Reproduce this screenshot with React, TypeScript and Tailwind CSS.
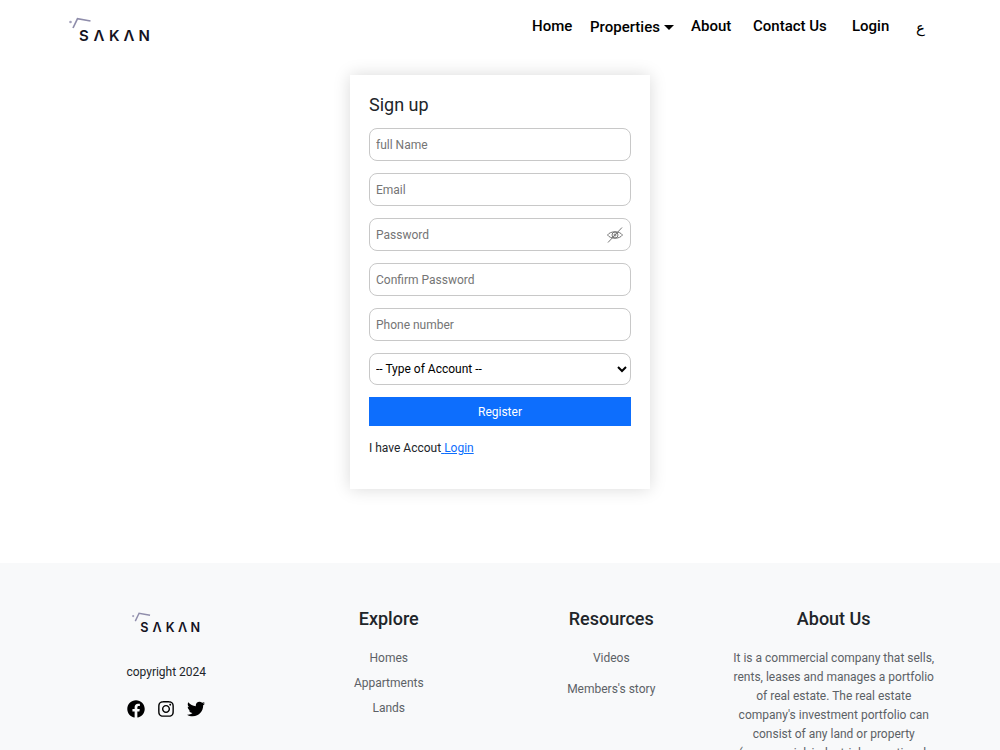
import { FaFacebook, FaInstagram, FaTwitter } from "react-icons/fa";

const fields = [
  { id: "fullName", label: "full Name", type: "text" },
  { id: "email", label: "Email", type: "email" },
  { id: "password", label: "Password", type: "password" },
  { id: "confirmPassword", label: "Confirm Password", type: "password" },
  { id: "phone", label: "Phone number", type: "tel" },
];

function Logo({ className }: { className: string }) {
  return (
    <svg viewBox="0 0 84 32" className={className} role="img" aria-label="Sakan">
      <circle cx="2.5" cy="6" r="1.3" fill="#a3a1bb" />
      <path
        d="M5 12 L9.5 2.6 L22.5 5"
        fill="none"
        stroke="#8f8dab"
        strokeWidth="1.7"
      />
      <text
        x="11 25.5 41 55.5 70.5"
        y="25"
        fontSize="15"
        fontWeight="600"
        fill="#15131f"
        className="font-['Inter',sans-serif]"
      >
        SΛKΛN
      </text>
    </svg>
  );
}

function EyeOff() {
  return (
    <svg
      viewBox="0 0 16 16"
      className="h-4 w-4"
      fill="none"
      stroke="#777"
      strokeWidth="1"
      aria-hidden="true"
    >
      <path d="M0.5 8 C3.5 3.7 12.5 3.7 15.5 8 C12.5 12.3 3.5 12.3 0.5 8 Z" />
      <circle cx="8" cy="8" r="3" />
      <circle cx="8" cy="8" r="1" />
      <path d="M1 15.5 L15 0.5" />
    </svg>
  );
}

function Navbar() {
  return (
    <header className="flex items-start justify-between pt-4 pr-[76px] pl-[68px]">
      <a href="#home">
        <Logo className="h-8 w-[84px]" />
      </a>
      <nav className="flex items-start text-[15px] leading-5 font-medium text-black">
        <a href="#home" className="w-[58px]">
          Home
        </a>
        <button
          type="button"
          className="flex w-[101px] items-center gap-1 pt-px font-medium"
        >
          Properties
          <span className="border-x-[5px] border-t-[5px] border-x-transparent border-t-black" />
        </button>
        <a href="#about" className="w-[62px]">
          About
        </a>
        <a href="#contact" className="w-[99px] whitespace-nowrap">
          Contact Us
        </a>
        <a href="#login" className="w-16">
          Login
        </a>
        <a href="#ar" lang="ar" className="w-2 pt-0.5 font-['DejaVu_Sans',sans-serif]">
          ع
        </a>
      </nav>
    </header>
  );
}

function SignUp() {
  return (
    <main className="mt-[27px] flex justify-center px-4 pb-[74px]">
      <form className="w-full max-w-[300px] bg-white px-[19px] pt-[18px] pb-[31px] shadow-[0_0_16px_rgba(0,0,0,0.15)]">
        <h1 className="mb-[11px] text-lg leading-6 text-[#212529]">Sign up</h1>
        <div className="flex flex-col gap-3">
          {fields.map((field) => (
            <div key={field.id} className="relative">
              <input
                id={field.id}
                type={field.type}
                placeholder={field.label}
                aria-label={field.label}
                className="block h-[33px] w-full rounded-lg border border-[#c8c8c8] px-1.5 placeholder:text-[#757575]"
              />
              {field.id === "password" && (
                <button
                  type="button"
                  aria-label="Show password"
                  className="absolute inset-y-0 right-2 flex items-center"
                >
                  <EyeOff />
                </button>
              )}
            </div>
          ))}
          <select
            aria-label="Type of Account"
            className="h-8 w-full rounded-lg border border-[#c8c8c8] bg-white px-0.5 text-black"
          >
            <option>-- Type of Account --</option>
          </select>
          <button type="submit" className="h-[29px] bg-[#0d6efd] text-white">
            Register
          </button>
        </div>
        <p className="mt-[13px] leading-[19px] text-[#212529]">
          I have Accout
          <a href="#login" className="text-[#0d6efd] underline">
            {" "}
            Login
          </a>
        </p>
      </form>
    </main>
  );
}

function Footer() {
  return (
    <footer className="bg-[#f8f9fa] px-[55px] pt-11 pb-12 text-center leading-[19px] text-[#5c6166]">
      <div className="grid grid-cols-4">
        <div className="flex flex-col items-center text-black">
          <Logo className="mt-1 h-[27px] w-[71px]" />
          <p className="mt-[25px] text-[#212529]">copyright 2024</p>
          <div className="mt-[18px] flex gap-3 text-lg">
            <a href="#facebook" aria-label="Facebook">
              <FaFacebook />
            </a>
            <a href="#instagram" aria-label="Instagram">
              <FaInstagram />
            </a>
            <a href="#twitter" aria-label="Twitter">
              <FaTwitter />
            </a>
          </div>
        </div>
        <div>
          <h2 className="mb-[18px] text-lg leading-6 font-medium text-[#212529]">Explore</h2>
          <ul className="flex flex-col gap-1.5">
            <li>
              <a href="#homes">Homes</a>
            </li>
            <li>
              <a href="#appartments">Appartments</a>
            </li>
            <li>
              <a href="#lands">Lands</a>
            </li>
          </ul>
        </div>
        <div>
          <h2 className="mb-[18px] text-lg leading-6 font-medium text-[#212529]">Resources</h2>
          <ul className="flex flex-col gap-3">
            <li>
              <a href="#videos">Videos</a>
            </li>
            <li>
              <a href="#stories">Members's story</a>
            </li>
          </ul>
        </div>
        <div className="px-2.5">
          <h2 className="mb-[18px] text-lg leading-6 font-medium text-[#212529]">About Us</h2>
          <p>
            It is a commercial company that sells, rents, leases and manages a
            portfolio of real estate. The real estate company's investment
            portfolio can consist of any land or property (commercial,
            industrial, operational,
          </p>
        </div>
      </div>
    </footer>
  );
}

export default function App() {
  return (
    <div className="bg-white font-['Roboto',sans-serif] text-xs">
      <Navbar />
      <SignUp />
      <Footer />
    </div>
  );
}
